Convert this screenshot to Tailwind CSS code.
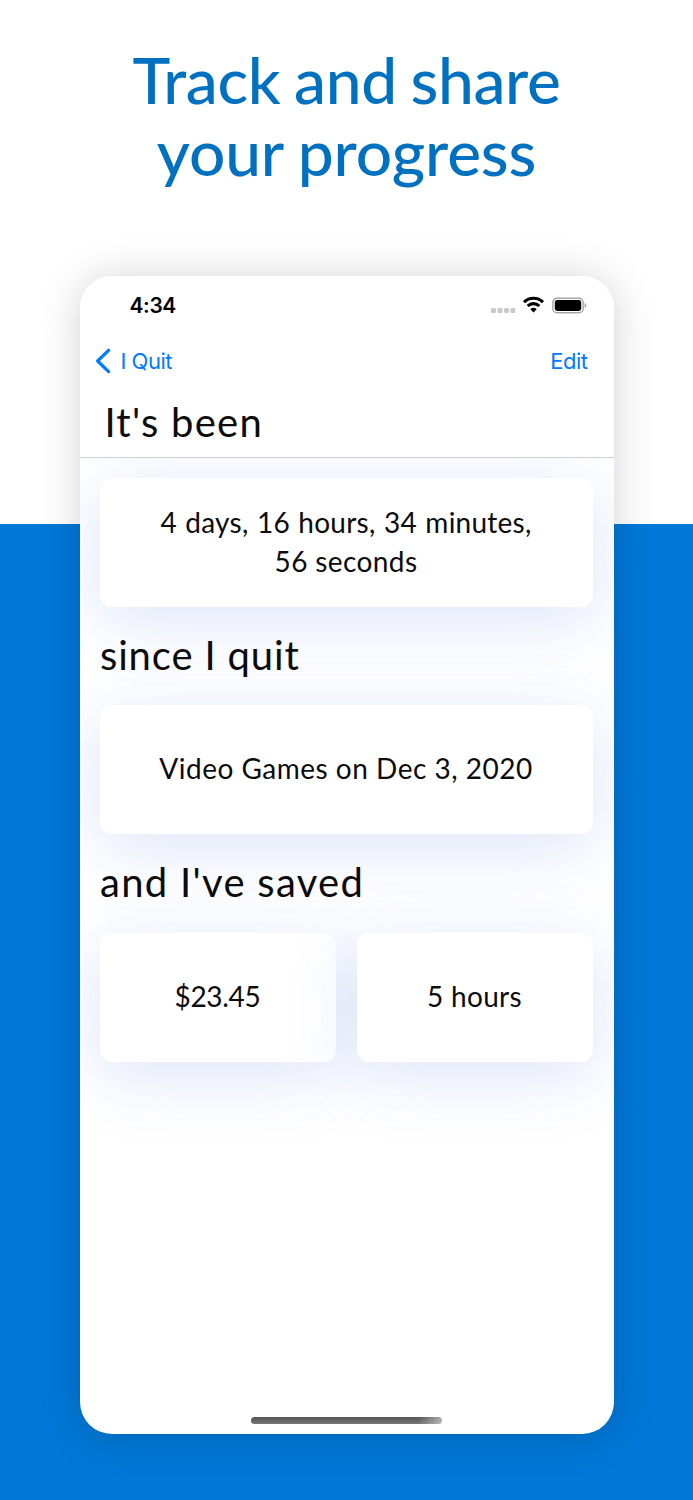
<!DOCTYPE html>
<html lang="en"><head><meta charset="utf-8"><title>I Quit</title>
<script src="https://cdn.jsdelivr.net/npm/@tailwindcss/browser@4"></script></head>
<body class="w-[693px] h-[1500px] overflow-hidden bg-[linear-gradient(to_bottom,#fff_524px,#0078d7_524.5px)] font-['Lato',sans-serif] text-[#0c0c0c]">
<h1 class="h-[276px] pt-[44px] text-center text-[64px] leading-[72px] font-medium text-[#0070c0]"><span class="block tracking-[-0.35px] [word-spacing:-2px]">Track and share</span><span class="block tracking-[-0.15px] [word-spacing:-1px]">your progress</span></h1>
<main class="mx-auto w-[534px] h-[1158px] rounded-[32px] bg-white overflow-hidden shadow-[0_2px_42px_rgba(0,0,0,0.18)] flex flex-col">
  <header class="h-[182px] shrink-0 border-b border-[#cfcfd2] bg-white relative z-10">
    <div class="h-[59px] pl-[50px] pr-[27px] flex items-center justify-between">
      <span class="font-['Inter',sans-serif] font-semibold text-[21px] tracking-[-0.4px] text-black">4:34</span>
      <svg width="97" height="20" viewBox="0 0 97 20" fill="none">
        <g fill="#c9c9c9"><rect x="1" y="12" width="5" height="5" rx="1.5"/><rect x="7.5" y="12" width="5" height="5" rx="1.5"/><rect x="14" y="12" width="5" height="5" rx="1.5"/><rect x="20.4" y="12" width="5" height="5" rx="1.5"/></g>
        <g stroke="#000" stroke-width="3.1"><path d="M34 6.1a13.6 13.6 0 0 1 19 0"/><path d="M37.7 10a8.3 8.3 0 0 1 11.6 0"/></g><path d="M40.3 13.200a4.800 4.800 0 0 1 6.400 0l-3.200 3.300z" fill="#000"/>
        <rect x="62.8" y="2.2" width="30.4" height="14.6" rx="4.2" stroke="#a6a6a6" stroke-width="1.4"/><rect x="64.8" y="4" width="26.4" height="11" rx="2.4" fill="#000"/><path d="M94.6 7.1c2.4.8 2.4 4 0 4.800z" fill="#a6a6a6"/>
      </svg>
    </div>
    <div class="h-[52px] pl-[15px] pr-[26px] flex items-center justify-between text-[#007aff] font-['Inter',sans-serif] text-[22px] tracking-[-0.5px]">
      <span class="flex items-center gap-[9px]"><svg width="17" height="26" viewBox="0 0 17 26" fill="none" stroke="currentColor" stroke-width="3.2" stroke-linecap="round" stroke-linejoin="round"><path d="M13.6 2.3 2.6 13l11 10.700"/></svg>I Quit</span><span>Edit</span>
    </div>
    <h2 class="pl-[25px] pt-[11px] text-[40px] leading-[48px] tracking-[1.25px]">It's been</h2>
  </header>
  <section class="pl-5 pr-[21px] pt-[19.5px]">
    <div class="h-[129px] rounded-[12px] bg-white shadow-[0_13px_68px_rgba(65,105,215,0.18)] flex flex-col items-center justify-center pb-[1px] text-[28px] leading-[39px] tracking-[0.4px]"><span class="[word-spacing:1px] tracking-[0.25px]">4 days, 16 hours, 34 minutes,</span><span>56 seconds</span></div>
    <h2 class="h-[98.5px] pt-[24px] pl-[0.5px] text-[40px] leading-[48px] tracking-[0.85px]">since I quit</h2>
    <div class="h-[129px] rounded-[12px] bg-white shadow-[0_13px_68px_rgba(65,105,215,0.18)] flex items-center justify-center pb-[2px] text-[28px] leading-[39px] tracking-[0.5px]">Video Games on Dec 3, 2020</div>
    <h2 class="h-[98.5px] pt-[24px] pl-[0.5px] text-[40px] leading-[48px] tracking-[1.3px]">and I've saved</h2>
    <div class="grid grid-cols-2 gap-[21px] text-[28px] leading-[39px]">
      <div class="h-[129px] rounded-[12px] bg-white shadow-[0_13px_68px_rgba(65,105,215,0.18)] flex items-center justify-center pb-[2px] tracking-[-0.3px]">$23.45</div>
      <div class="h-[129px] rounded-[12px] bg-white shadow-[0_13px_68px_rgba(65,105,215,0.18)] flex items-center justify-center pb-[2px] tracking-[0.3px]">5 hours</div>
    </div>
  </section>
  <div class="mt-auto mb-[10px] mx-auto w-[191px] h-[7px] rounded-full bg-[linear-gradient(to_right,transparent_88%,#ffffff80),linear-gradient(#555,#777)]"></div>
</main></body></html>
